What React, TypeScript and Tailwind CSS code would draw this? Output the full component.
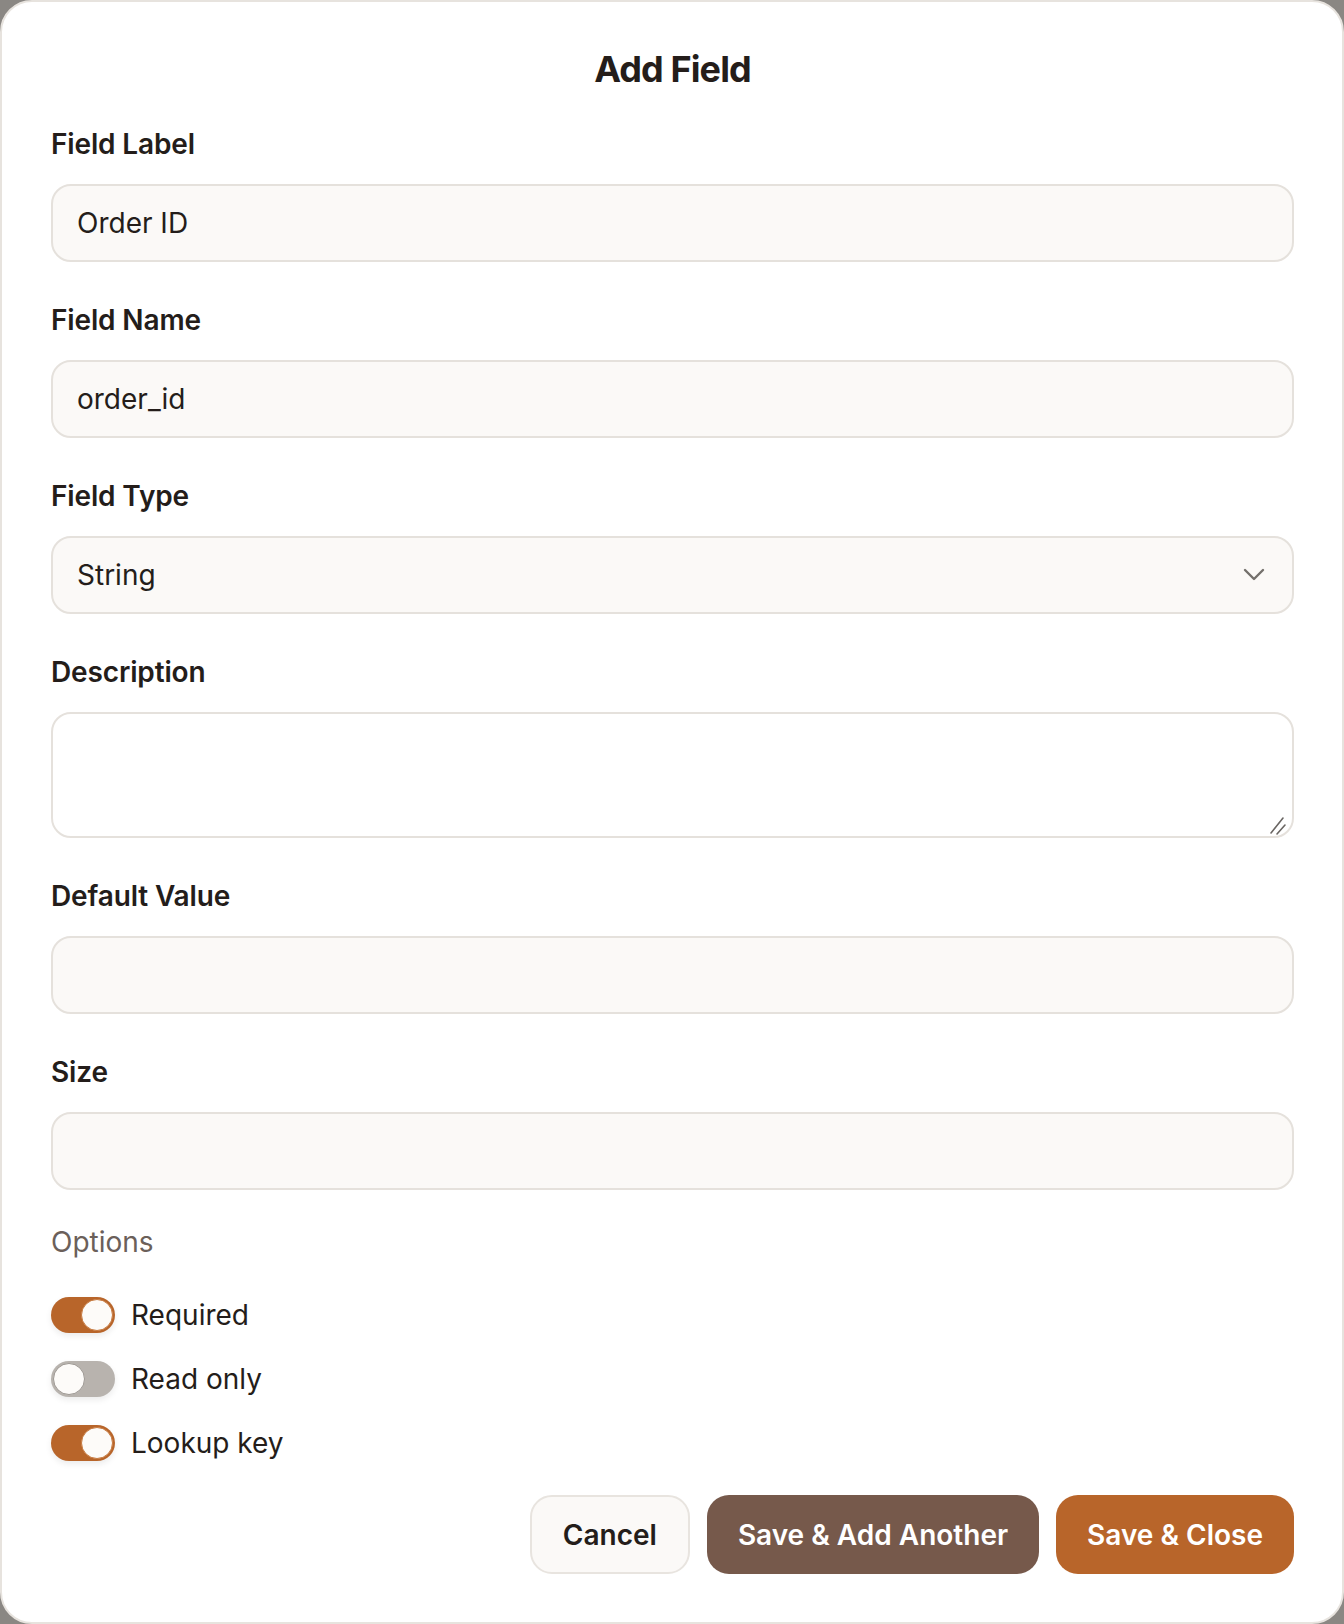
import React, { useState } from "react";

const font = { fontFamily: 'Inter, "Noto Sans", sans-serif' };

interface FieldProps {
  label: string;
  first?: boolean;
  children: React.ReactNode;
}

const Field: React.FC<FieldProps> = ({ label, first, children }) => (
  <div className={first ? "mt-[33px]" : "mt-[38px]"}>
    <label className="block h-[40px] text-[28px] leading-[40px] font-semibold tracking-[-0.005em] text-[#241d1a] mb-[20px]">
      {label}
    </label>
    {children}
  </div>
);

const inputCls =
  "w-full h-[78px] rounded-[20px] border-2 border-[#e5e1dc] bg-[#fbf9f7] px-[24px] text-[28px] text-[#241d1a] outline-none";

interface ToggleProps {
  label: string;
  initial: boolean;
}

const Toggle: React.FC<ToggleProps> = ({ label, initial }) => {
  const [on, setOn] = useState(initial);
  return (
    <div className="flex items-center gap-[16px] h-[36px]">
      <button
        type="button"
        onClick={() => setOn(!on)}
        className={`relative w-[64px] h-[36px] rounded-full shadow-[0_3px_6px_rgba(0,0,0,0.08)] ${
          on ? "bg-[#b8652a]" : "bg-[#b8b3ae]"
        }`}
      >
        <span
          className={`absolute top-[2px] h-[32px] w-[32px] rounded-full bg-[#fdfbf9] border ${
            on ? "right-[2px] border-[#c77a40]" : "left-[2px] border-[#9d9893]"
          }`}
        />
      </button>
      <span className="text-[28px] leading-[36px] text-[#241d1a]">{label}</span>
    </div>
  );
};

export default function App() {
  const [label, setLabel] = useState("Order ID");
  const [name, setName] = useState("order_id");
  const [type, setType] = useState("String");

  return (
    <div className="min-h-[1624px] bg-[#8a8783]" style={font}>
      <div className="min-h-[1624px] rounded-[32px] bg-white border-2 border-[#e7e3de] pl-[49px] pr-[48px] pt-[45px] pb-[48px]">
        <h1 className="text-center text-[36px] leading-[44px] h-[44px] font-bold tracking-tight text-[#241d1a]">
          Add Field
        </h1>

        <Field label="Field Label" first>
          <input className={inputCls} value={label} onChange={(e) => setLabel(e.target.value)} />
        </Field>

        <Field label="Field Name">
          <input className={inputCls} value={name} onChange={(e) => setName(e.target.value)} />
        </Field>

        <Field label="Field Type">
          <div className="relative">
            <select
              className={`${inputCls} appearance-none`}
              value={type}
              onChange={(e) => setType(e.target.value)}
            >
              <option>String</option>
              <option>Number</option>
              <option>Boolean</option>
              <option>Date</option>
            </select>
            <svg
              width="22"
              height="14"
              viewBox="0 0 22 14"
              fill="none"
              className="absolute right-[29px] top-1/2 -translate-y-1/2 pointer-events-none"
            >
              <polyline points="2,2 11,11 20,2" stroke="#74706c" strokeWidth="2.4" strokeLinecap="round" strokeLinejoin="round" />
            </svg>
          </div>
        </Field>

        <Field label="Description">
          <div className="relative">
            <textarea className="block w-full h-[126px] resize-none rounded-[20px] border-2 border-[#e5e1dc] bg-white px-[24px] py-[16px] text-[28px] text-[#241d1a] outline-none" />
            {/* resize grip */}
            <svg width="22" height="22" viewBox="0 0 22 22" fill="none" className="absolute right-[4px] bottom-[2px] pointer-events-none">
              <line x1="3" y1="19" x2="15" y2="4" stroke="#6a6663" strokeWidth="1.6" strokeLinecap="round" />
              <line x1="9" y1="20" x2="17" y2="11" stroke="#6a6663" strokeWidth="1.6" strokeLinecap="round" />
            </svg>
          </div>
        </Field>

        <Field label="Default Value">
          <input className={inputCls} />
        </Field>

        <Field label="Size">
          <input className={inputCls} />
        </Field>

        <div className="mt-[32px] h-[40px] text-[28px] leading-[40px] text-[#6b605a]">Options</div>

        <div className="mt-[35px] flex flex-col gap-[28px]">
          <Toggle label="Required" initial={true} />
          <Toggle label="Read only" initial={false} />
          <Toggle label="Lookup key" initial={true} />
        </div>

        <div className="mt-[34px] flex justify-end gap-[17px]">
          <button className="h-[79px] px-[31px] rounded-[22px] border-2 border-[#e8e4df] bg-[#fbf9f7] text-[28px] font-semibold text-[#241d1a]">
            Cancel
          </button>
          <button className="h-[79px] px-[31px] rounded-[22px] bg-[#76594b] text-[28px] font-semibold text-white">
            Save &amp; Add Another
          </button>
          <button className="h-[79px] px-[31px] rounded-[22px] bg-[#b8652a] text-[28px] font-semibold text-white">
            Save &amp; Close
          </button>
        </div>
      </div>
    </div>
  );
}
